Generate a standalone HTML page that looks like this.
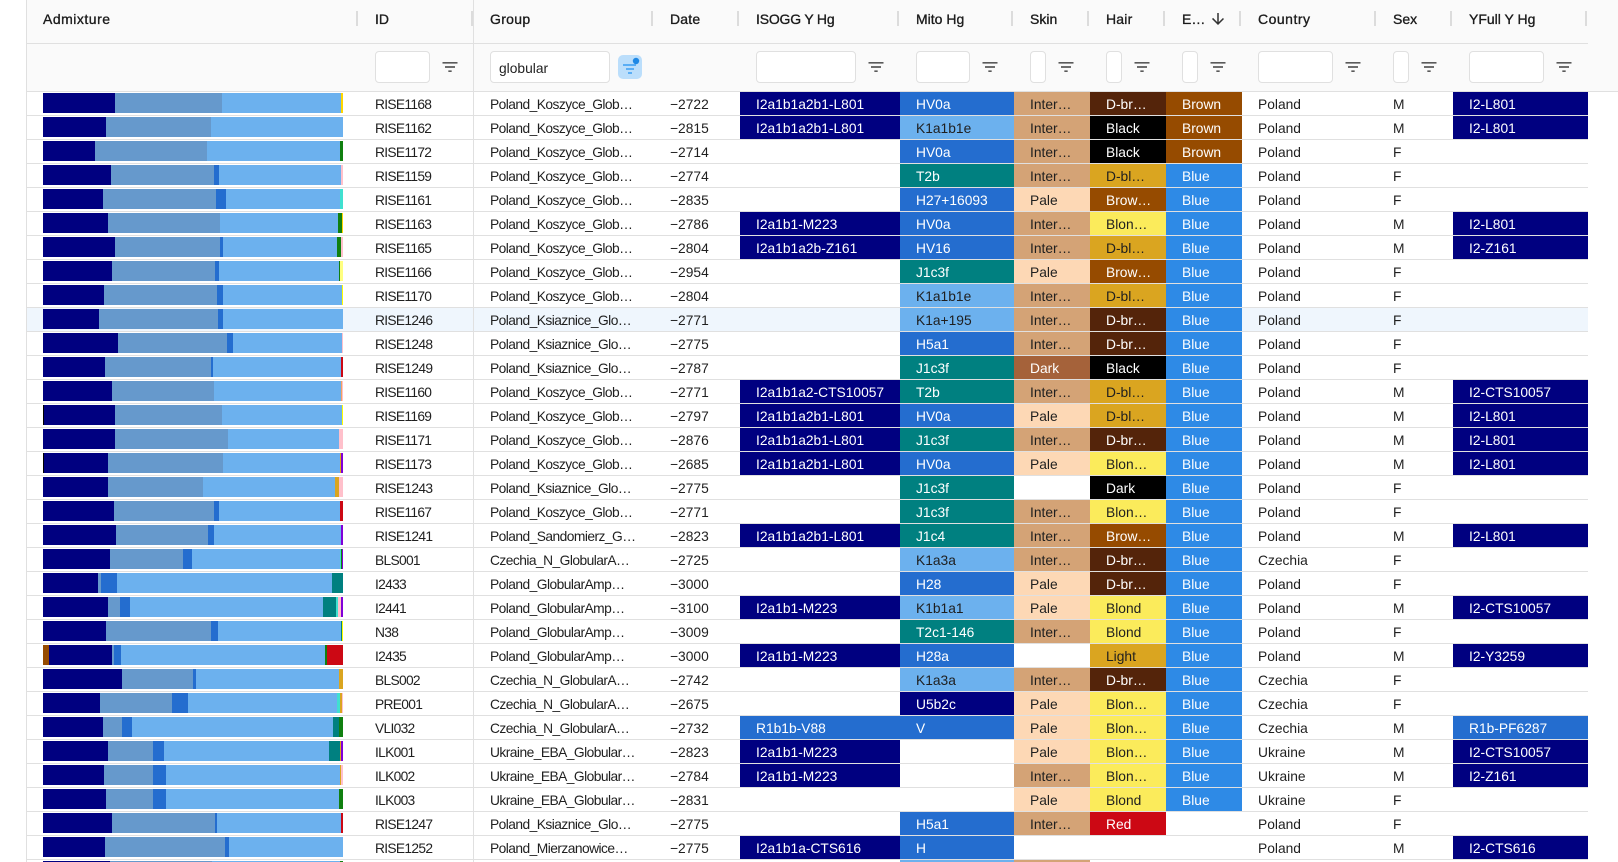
<!DOCTYPE html>
<html><head><meta charset="utf-8"><style>
*{box-sizing:border-box}
html,body{margin:0;padding:0;width:1618px;height:862px;overflow:hidden;background:#fff}
body{position:relative;font-family:"Liberation Sans",Arial,sans-serif;font-size:13.8px;letter-spacing:0;color:#1f1f1f}
.abs{position:absolute}
.hd{left:27px;top:0;width:1591px;height:91px;background:#fafafa}
.l1{left:27px;top:43px;width:1561px;height:1px;background:#e0e0e0}
.l2{left:27px;top:91px;width:1591px;height:1px;background:#e0e0e0}
.vl{top:0;height:862px;width:1px;background:#e0e0e0;z-index:5}
.sep{top:11px;width:2px;height:15px;background:#dcdcdc}
.h{top:11px;line-height:16px;font-size:14px;font-weight:400;-webkit-text-stroke:.35px rgba(0,0,0,.8);white-space:nowrap}
.in{top:51px;height:32px;background:#fff;border:1px solid #e0e0e0;border-radius:4px;line-height:34px;padding-left:8px;white-space:nowrap}
.fi{top:57px;width:20px;height:20px;fill:#5a5a5a}
.fa{left:618px;top:55px;width:24px;height:24px;background:#bbdefb;border-radius:5px}
.r{position:absolute;left:27px;width:1561px;height:24px;border-bottom:1px solid #e0e0e0;display:grid;grid-template-columns:332px 115px 180px 86px 160px 114px 76px 76px 76px 135px 76px 135px}
.r>b{display:block;font-weight:400;height:23px;line-height:25px;padding-left:16px;white-space:nowrap;overflow:hidden}
.r>b.i{letter-spacing:-.7px}
.r>b:nth-child(3){letter-spacing:-.55px}
.m{display:flex}
.m div{display:flex;width:300px;height:20px;margin-top:1px}
.m i{display:block;height:20px;flex:none}
.n{background:#000080;color:#fff}.s{background:#6699cc}.d{background:#246dcf;color:#fff}.l{background:#6cb1ee}
.g{background:#108010}.y{background:#ffd700}.p{background:#ffc0cb}.t{background:#40e0d0}.e{background:#ffff80}
.o{background:#f4a460}.u{background:#ffff00}.k{background:#000;color:#fff}.v{background:#8000d8}.q{background:#daa520}
.a{background:#008080;color:#fff}.h2{background:#964b00;color:#fff}.c{background:#cc0814;color:#fff}
.tn{background:#d4a376}.pl{background:#fdd8b5}.dk{background:#a5623a;color:#fff}.db{background:#54240a;color:#fff}
.yl{background:#fbeb5b}.bl{background:#2e8ae6;color:#fff}
</style></head><body>
<div class="abs hd"></div><div class="abs l1"></div><div class="abs l2"></div>
<div class="abs vl" style="left:26px"></div><div class="abs vl" style="left:473px"></div>

<div class="abs h" style="left:43px;letter-spacing:.5px">Admixture</div>
<div class="abs h" style="left:375px">ID</div>
<div class="abs h" style="left:490px;letter-spacing:.3px">Group</div>
<div class="abs h" style="left:670px;letter-spacing:.2px">Date</div>
<div class="abs h" style="left:756px;letter-spacing:-.2px">ISOGG Y Hg</div>
<div class="abs h" style="left:916px">Mito Hg</div>
<div class="abs h" style="left:1030px">Skin</div>
<div class="abs h" style="left:1106px;letter-spacing:.2px">Hair</div>
<div class="abs h" style="left:1182px">E…</div>
<div class="abs h" style="left:1258px;letter-spacing:.5px">Country</div>
<div class="abs h" style="left:1393px">Sex</div>
<div class="abs h" style="left:1469px">YFull Y Hg</div>
<svg class="abs" style="left:1209px;top:10px;width:18px;height:18px;fill:#333" viewBox="0 0 24 24"><path d="M20 12l-1.41-1.41L13 16.17V4h-2v12.17l-5.58-5.59L4 12l8 8 8-8z"/></svg>

<div class="abs sep" style="left:356px"></div><div class="abs sep" style="left:471px"></div><div class="abs sep" style="left:651px"></div><div class="abs sep" style="left:737px"></div><div class="abs sep" style="left:897px"></div><div class="abs sep" style="left:1011px"></div><div class="abs sep" style="left:1087px"></div><div class="abs sep" style="left:1163px"></div><div class="abs sep" style="left:1239px"></div><div class="abs sep" style="left:1374px"></div><div class="abs sep" style="left:1450px"></div><div class="abs sep" style="left:1585px"></div>

<div class="abs in" style="left:375px;width:55px"></div>
<div class="abs in" style="left:490px;width:120px">globular</div>
<div class="abs in" style="left:756px;width:100px"></div>
<div class="abs in" style="left:916px;width:54px"></div>
<div class="abs in" style="left:1030px;width:16px"></div>
<div class="abs in" style="left:1106px;width:16px"></div>
<div class="abs in" style="left:1182px;width:16px"></div>
<div class="abs in" style="left:1258px;width:75px"></div>
<div class="abs in" style="left:1393px;width:16px"></div>
<div class="abs in" style="left:1469px;width:75px"></div>

<svg class="abs fi" style="left:440px" viewBox="0 0 24 24"><path d="M10 18h4v-2h-4v2zM3 6v2h18V6H3zm3 7h12v-2H6v2z"/></svg>
<svg class="abs fi" style="left:866px" viewBox="0 0 24 24"><path d="M10 18h4v-2h-4v2zM3 6v2h18V6H3zm3 7h12v-2H6v2z"/></svg>
<svg class="abs fi" style="left:980px" viewBox="0 0 24 24"><path d="M10 18h4v-2h-4v2zM3 6v2h18V6H3zm3 7h12v-2H6v2z"/></svg>
<svg class="abs fi" style="left:1056px" viewBox="0 0 24 24"><path d="M10 18h4v-2h-4v2zM3 6v2h18V6H3zm3 7h12v-2H6v2z"/></svg>
<svg class="abs fi" style="left:1132px" viewBox="0 0 24 24"><path d="M10 18h4v-2h-4v2zM3 6v2h18V6H3zm3 7h12v-2H6v2z"/></svg>
<svg class="abs fi" style="left:1208px" viewBox="0 0 24 24"><path d="M10 18h4v-2h-4v2zM3 6v2h18V6H3zm3 7h12v-2H6v2z"/></svg>
<svg class="abs fi" style="left:1343px" viewBox="0 0 24 24"><path d="M10 18h4v-2h-4v2zM3 6v2h18V6H3zm3 7h12v-2H6v2z"/></svg>
<svg class="abs fi" style="left:1419px" viewBox="0 0 24 24"><path d="M10 18h4v-2h-4v2zM3 6v2h18V6H3zm3 7h12v-2H6v2z"/></svg>
<svg class="abs fi" style="left:1554px" viewBox="0 0 24 24"><path d="M10 18h4v-2h-4v2zM3 6v2h18V6H3zm3 7h12v-2H6v2z"/></svg>
<div class="abs fa"><svg style="position:absolute;left:0;top:0" width="24" height="24" viewBox="0 0 24 24"><path fill="#5aaef5" d="M5 9h13v2H5zM8 13h8v2H8zM10 17h4v2h-4z"/><circle cx="18" cy="6" r="3.2" fill="#1e88e5"/></svg></div>

<div class="r" style="top:92px"><b class="m"><div><i class="n" style="width:72px"></i><i class="s" style="width:107px"></i><i class="l" style="width:119px"></i><i class="y" style="width:2px"></i></div></b><b class="i">RISE1168</b><b>Poland_Koszyce_Glob…</b><b>−2722</b><b class="n">I2a1b1a2b1-L801</b><b class="d">HV0a</b><b class="tn">Inter…</b><b class="db">D-br…</b><b class="h2">Brown</b><b>Poland</b><b>M</b><b class="n">I2-L801</b></div>
<div class="r" style="top:116px"><b class="m"><div><i class="n" style="width:63px"></i><i class="s" style="width:105px"></i><i class="l" style="width:132px"></i></div></b><b class="i">RISE1162</b><b>Poland_Koszyce_Glob…</b><b>−2815</b><b class="n">I2a1b1a2b1-L801</b><b class="l">K1a1b1e</b><b class="tn">Inter…</b><b class="k">Black</b><b class="h2">Brown</b><b>Poland</b><b>M</b><b class="n">I2-L801</b></div>
<div class="r" style="top:140px"><b class="m"><div><i class="n" style="width:52px"></i><i class="s" style="width:112px"></i><i class="l" style="width:133px"></i><i class="g" style="width:3px"></i></div></b><b class="i">RISE1172</b><b>Poland_Koszyce_Glob…</b><b>−2714</b><b></b><b class="d">HV0a</b><b class="tn">Inter…</b><b class="k">Black</b><b class="h2">Brown</b><b>Poland</b><b>F</b><b></b></div>
<div class="r" style="top:164px"><b class="m"><div><i class="n" style="width:68px"></i><i class="s" style="width:103px"></i><i class="d" style="width:5px"></i><i class="l" style="width:122px"></i><i class="p" style="width:2px"></i></div></b><b class="i">RISE1159</b><b>Poland_Koszyce_Glob…</b><b>−2774</b><b></b><b class="a">T2b</b><b class="tn">Inter…</b><b class="q">D-bl…</b><b class="bl">Blue</b><b>Poland</b><b>F</b><b></b></div>
<div class="r" style="top:188px"><b class="m"><div><i class="n" style="width:60px"></i><i class="s" style="width:113px"></i><i class="d" style="width:10px"></i><i class="l" style="width:114px"></i><i class="t" style="width:3px"></i></div></b><b class="i">RISE1161</b><b>Poland_Koszyce_Glob…</b><b>−2835</b><b></b><b class="d">H27+16093</b><b class="pl">Pale</b><b class="h2">Brow…</b><b class="bl">Blue</b><b>Poland</b><b>F</b><b></b></div>
<div class="r" style="top:212px"><b class="m"><div><i class="n" style="width:65px"></i><i class="s" style="width:112px"></i><i class="l" style="width:118px"></i><i class="g" style="width:4px"></i><i class="y" style="width:1px"></i></div></b><b class="i">RISE1163</b><b>Poland_Koszyce_Glob…</b><b>−2786</b><b class="n">I2a1b1-M223</b><b class="d">HV0a</b><b class="tn">Inter…</b><b class="yl">Blon…</b><b class="bl">Blue</b><b>Poland</b><b>M</b><b class="n">I2-L801</b></div>
<div class="r" style="top:236px"><b class="m"><div><i class="n" style="width:72px"></i><i class="s" style="width:105px"></i><i class="d" style="width:3px"></i><i class="l" style="width:114px"></i><i class="g" style="width:4px"></i><i class="p" style="width:2px"></i></div></b><b class="i">RISE1165</b><b>Poland_Koszyce_Glob…</b><b>−2804</b><b class="n">I2a1b1a2b-Z161</b><b class="d">HV16</b><b class="tn">Inter…</b><b class="q">D-bl…</b><b class="bl">Blue</b><b>Poland</b><b>M</b><b class="n">I2-Z161</b></div>
<div class="r" style="top:260px"><b class="m"><div><i class="n" style="width:69px"></i><i class="s" style="width:103px"></i><i class="d" style="width:4px"></i><i class="l" style="width:120px"></i><i class="g" style="width:1px"></i><i class="e" style="width:3px"></i></div></b><b class="i">RISE1166</b><b>Poland_Koszyce_Glob…</b><b>−2954</b><b></b><b class="a">J1c3f</b><b class="pl">Pale</b><b class="h2">Brow…</b><b class="bl">Blue</b><b>Poland</b><b>F</b><b></b></div>
<div class="r" style="top:284px"><b class="m"><div><i class="n" style="width:61px"></i><i class="s" style="width:113px"></i><i class="d" style="width:6px"></i><i class="l" style="width:119px"></i><i class="u" style="width:1px"></i></div></b><b class="i">RISE1170</b><b>Poland_Koszyce_Glob…</b><b>−2804</b><b></b><b class="l">K1a1b1e</b><b class="tn">Inter…</b><b class="q">D-bl…</b><b class="bl">Blue</b><b>Poland</b><b>F</b><b></b></div>
<div class="r" style="top:308px;background:#eff6fd"><b class="m"><div><i class="n" style="width:56px"></i><i class="s" style="width:119px"></i><i class="d" style="width:5px"></i><i class="l" style="width:120px"></i></div></b><b class="i">RISE1246</b><b>Poland_Ksiaznice_Glo…</b><b>−2771</b><b></b><b class="l">K1a+195</b><b class="tn">Inter…</b><b class="db">D-br…</b><b class="bl">Blue</b><b>Poland</b><b>F</b><b></b></div>
<div class="r" style="top:332px"><b class="m"><div><i class="n" style="width:75px"></i><i class="s" style="width:109px"></i><i class="d" style="width:6px"></i><i class="l" style="width:109px"></i><i class="p" style="width:1px"></i></div></b><b class="i">RISE1248</b><b>Poland_Ksiaznice_Glo…</b><b>−2775</b><b></b><b class="d">H5a1</b><b class="tn">Inter…</b><b class="db">D-br…</b><b class="bl">Blue</b><b>Poland</b><b>F</b><b></b></div>
<div class="r" style="top:356px"><b class="m"><div><i class="n" style="width:62px"></i><i class="s" style="width:106px"></i><i class="d" style="width:2px"></i><i class="l" style="width:128px"></i><i class="c" style="width:2px"></i></div></b><b class="i">RISE1249</b><b>Poland_Ksiaznice_Glo…</b><b>−2787</b><b></b><b class="a">J1c3f</b><b class="dk">Dark</b><b class="k">Black</b><b class="bl">Blue</b><b>Poland</b><b>F</b><b></b></div>
<div class="r" style="top:380px"><b class="m"><div><i class="n" style="width:69px"></i><i class="s" style="width:102px"></i><i class="l" style="width:127px"></i><i class="o" style="width:1px"></i><i class="p" style="width:1px"></i></div></b><b class="i">RISE1160</b><b>Poland_Koszyce_Glob…</b><b>−2771</b><b class="n">I2a1b1a2-CTS10057</b><b class="a">T2b</b><b class="tn">Inter…</b><b class="q">D-bl…</b><b class="bl">Blue</b><b>Poland</b><b>M</b><b class="n">I2-CTS10057</b></div>
<div class="r" style="top:404px"><b class="m"><div><i class="k" style="width:1px"></i><i class="n" style="width:71px"></i><i class="s" style="width:107px"></i><i class="l" style="width:120px"></i><i class="u" style="width:1px"></i></div></b><b class="i">RISE1169</b><b>Poland_Koszyce_Glob…</b><b>−2797</b><b class="n">I2a1b1a2b1-L801</b><b class="d">HV0a</b><b class="pl">Pale</b><b class="q">D-bl…</b><b class="bl">Blue</b><b>Poland</b><b>M</b><b class="n">I2-L801</b></div>
<div class="r" style="top:428px"><b class="m"><div><i class="n" style="width:72px"></i><i class="s" style="width:113px"></i><i class="l" style="width:111px"></i><i class="p" style="width:4px"></i></div></b><b class="i">RISE1171</b><b>Poland_Koszyce_Glob…</b><b>−2876</b><b class="n">I2a1b1a2b1-L801</b><b class="a">J1c3f</b><b class="tn">Inter…</b><b class="db">D-br…</b><b class="bl">Blue</b><b>Poland</b><b>M</b><b class="n">I2-L801</b></div>
<div class="r" style="top:452px"><b class="m"><div><i class="k" style="width:1px"></i><i class="n" style="width:64px"></i><i class="s" style="width:115px"></i><i class="l" style="width:117px"></i><i class="q" style="width:1px"></i><i class="v" style="width:2px"></i></div></b><b class="i">RISE1173</b><b>Poland_Koszyce_Glob…</b><b>−2685</b><b class="n">I2a1b1a2b1-L801</b><b class="d">HV0a</b><b class="pl">Pale</b><b class="yl">Blon…</b><b class="bl">Blue</b><b>Poland</b><b>M</b><b class="n">I2-L801</b></div>
<div class="r" style="top:476px"><b class="m"><div><i class="n" style="width:65px"></i><i class="s" style="width:95px"></i><i class="l" style="width:132px"></i><i class="q" style="width:4px"></i><i class="p" style="width:4px"></i></div></b><b class="i">RISE1243</b><b>Poland_Ksiaznice_Glo…</b><b>−2775</b><b></b><b class="a">J1c3f</b><b></b><b class="k">Dark</b><b class="bl">Blue</b><b>Poland</b><b>F</b><b></b></div>
<div class="r" style="top:500px"><b class="m"><div><i class="n" style="width:71px"></i><i class="s" style="width:100px"></i><i class="d" style="width:5px"></i><i class="l" style="width:121px"></i><i class="c" style="width:3px"></i></div></b><b class="i">RISE1167</b><b>Poland_Koszyce_Glob…</b><b>−2771</b><b></b><b class="a">J1c3f</b><b class="tn">Inter…</b><b class="yl">Blon…</b><b class="bl">Blue</b><b>Poland</b><b>F</b><b></b></div>
<div class="r" style="top:524px"><b class="m"><div><i class="n" style="width:73px"></i><i class="s" style="width:92px"></i><i class="d" style="width:6px"></i><i class="l" style="width:127px"></i><i class="v" style="width:2px"></i></div></b><b class="i">RISE1241</b><b>Poland_Sandomierz_G…</b><b>−2823</b><b class="n">I2a1b1a2b1-L801</b><b class="a">J1c4</b><b class="tn">Inter…</b><b class="h2">Brow…</b><b class="bl">Blue</b><b>Poland</b><b>M</b><b class="n">I2-L801</b></div>
<div class="r" style="top:548px"><b class="m"><div><i class="n" style="width:67px"></i><i class="s" style="width:73px"></i><i class="d" style="width:9px"></i><i class="l" style="width:148px"></i><i class="t" style="width:1px"></i><i class="g" style="width:1px"></i><i class="v" style="width:1px"></i></div></b><b class="i">BLS001</b><b>Czechia_N_GlobularA…</b><b>−2725</b><b></b><b class="l">K1a3a</b><b class="tn">Inter…</b><b class="db">D-br…</b><b class="bl">Blue</b><b>Czechia</b><b>F</b><b></b></div>
<div class="r" style="top:572px"><b class="m"><div><i class="n" style="width:55px"></i><i class="s" style="width:3px"></i><i class="d" style="width:16px"></i><i class="l" style="width:215px"></i><i class="a" style="width:11px"></i></div></b><b class="i">I2433</b><b>Poland_GlobularAmp…</b><b>−3000</b><b></b><b class="d">H28</b><b class="pl">Pale</b><b class="db">D-br…</b><b class="bl">Blue</b><b>Poland</b><b>F</b><b></b></div>
<div class="r" style="top:596px"><b class="m"><div><i class="n" style="width:65px"></i><i class="s" style="width:12px"></i><i class="d" style="width:10px"></i><i class="l" style="width:193px"></i><i class="a" style="width:13px"></i><i class="t" style="width:2px"></i><i class="p" style="width:3px"></i><i class="v" style="width:2px"></i></div></b><b class="i">I2441</b><b>Poland_GlobularAmp…</b><b>−3100</b><b class="n">I2a1b1-M223</b><b class="l">K1b1a1</b><b class="pl">Pale</b><b class="yl">Blond</b><b class="bl">Blue</b><b>Poland</b><b>M</b><b class="n">I2-CTS10057</b></div>
<div class="r" style="top:620px"><b class="m"><div><i class="n" style="width:63px"></i><i class="s" style="width:105px"></i><i class="d" style="width:7px"></i><i class="l" style="width:123px"></i><i class="a" style="width:1px"></i><i class="u" style="width:1px"></i></div></b><b class="i">N38</b><b>Poland_GlobularAmp…</b><b>−3009</b><b></b><b class="a">T2c1-146</b><b class="tn">Inter…</b><b class="yl">Blond</b><b class="bl">Blue</b><b>Poland</b><b>F</b><b></b></div>
<div class="r" style="top:644px"><b class="m"><div><i class="h2" style="width:6px"></i><i class="n" style="width:63px"></i><i class="s" style="width:2px"></i><i class="d" style="width:7px"></i><i class="l" style="width:204px"></i><i class="g" style="width:2px"></i><i class="c" style="width:16px"></i></div></b><b class="i">I2435</b><b>Poland_GlobularAmp…</b><b>−3000</b><b class="n">I2a1b1-M223</b><b class="d">H28a</b><b></b><b class="q">Light</b><b class="bl">Blue</b><b>Poland</b><b>M</b><b class="n">I2-Y3259</b></div>
<div class="r" style="top:668px"><b class="m"><div><i class="n" style="width:79px"></i><i class="s" style="width:71px"></i><i class="d" style="width:3px"></i><i class="l" style="width:143px"></i><i class="q" style="width:4px"></i></div></b><b class="i">BLS002</b><b>Czechia_N_GlobularA…</b><b>−2742</b><b></b><b class="l">K1a3a</b><b class="tn">Inter…</b><b class="db">D-br…</b><b class="bl">Blue</b><b>Czechia</b><b>F</b><b></b></div>
<div class="r" style="top:692px"><b class="m"><div><i class="n" style="width:57px"></i><i class="s" style="width:72px"></i><i class="d" style="width:16px"></i><i class="l" style="width:149px"></i><i class="t" style="width:3px"></i><i class="q" style="width:2px"></i><i class="p" style="width:1px"></i></div></b><b class="i">PRE001</b><b>Czechia_N_GlobularA…</b><b>−2675</b><b></b><b class="n">U5b2c</b><b class="pl">Pale</b><b class="yl">Blon…</b><b class="bl">Blue</b><b>Czechia</b><b>F</b><b></b></div>
<div class="r" style="top:716px"><b class="m"><div><i class="n" style="width:60px"></i><i class="s" style="width:19px"></i><i class="d" style="width:10px"></i><i class="l" style="width:201px"></i><i class="a" style="width:6px"></i><i class="g" style="width:4px"></i></div></b><b class="i">VLI032</b><b>Czechia_N_GlobularA…</b><b>−2732</b><b class="d">R1b1b-V88</b><b class="d">V</b><b class="pl">Pale</b><b class="yl">Blon…</b><b class="bl">Blue</b><b>Czechia</b><b>M</b><b class="d">R1b-PF6287</b></div>
<div class="r" style="top:740px"><b class="m"><div><i class="n" style="width:65px"></i><i class="s" style="width:45px"></i><i class="d" style="width:11px"></i><i class="l" style="width:165px"></i><i class="a" style="width:11px"></i><i class="q" style="width:1px"></i><i class="v" style="width:2px"></i></div></b><b class="i">ILK001</b><b>Ukraine_EBA_Globular…</b><b>−2823</b><b class="n">I2a1b1-M223</b><b></b><b class="pl">Pale</b><b class="yl">Blon…</b><b class="bl">Blue</b><b>Ukraine</b><b>M</b><b class="n">I2-CTS10057</b></div>
<div class="r" style="top:764px"><b class="m"><div><i class="n" style="width:61px"></i><i class="s" style="width:49px"></i><i class="d" style="width:13px"></i><i class="l" style="width:174px"></i><i class="q" style="width:1px"></i><i class="p" style="width:2px"></i></div></b><b class="i">ILK002</b><b>Ukraine_EBA_Globular…</b><b>−2784</b><b class="n">I2a1b1-M223</b><b></b><b class="tn">Inter…</b><b class="yl">Blon…</b><b class="bl">Blue</b><b>Ukraine</b><b>M</b><b class="n">I2-Z161</b></div>
<div class="r" style="top:788px"><b class="m"><div><i class="n" style="width:63px"></i><i class="s" style="width:47px"></i><i class="d" style="width:13px"></i><i class="l" style="width:173px"></i><i class="g" style="width:4px"></i></div></b><b class="i">ILK003</b><b>Ukraine_EBA_Globular…</b><b>−2831</b><b></b><b></b><b class="pl">Pale</b><b class="yl">Blond</b><b class="bl">Blue</b><b>Ukraine</b><b>F</b><b></b></div>
<div class="r" style="top:812px"><b class="m"><div><i class="n" style="width:69px"></i><i class="s" style="width:103px"></i><i class="d" style="width:2px"></i><i class="l" style="width:124px"></i><i class="c" style="width:2px"></i></div></b><b class="i">RISE1247</b><b>Poland_Ksiaznice_Glo…</b><b>−2775</b><b></b><b class="d">H5a1</b><b class="tn">Inter…</b><b class="c">Red</b><b></b><b>Poland</b><b>F</b><b></b></div>
<div class="r" style="top:836px"><b class="m"><div><i class="n" style="width:62px"></i><i class="s" style="width:120px"></i><i class="d" style="width:4px"></i><i class="l" style="width:114px"></i></div></b><b class="i">RISE1252</b><b>Poland_Mierzanowice…</b><b>−2775</b><b class="n">I2a1b1a-CTS616</b><b class="d">H</b><b></b><b></b><b></b><b>Poland</b><b>M</b><b class="n">I2-CTS616</b></div>
<div class="r" style="top:860px"><b class="m"><div><i class="n" style="width:67px"></i><i class="s" style="width:102px"></i><i class="l" style="width:128px"></i><i class="g" style="width:3px"></i></div></b><b></b><b></b><b></b><b></b><b class="l"></b><b class="tn"></b><b></b><b></b><b></b><b></b><b></b></div>
</body></html>
